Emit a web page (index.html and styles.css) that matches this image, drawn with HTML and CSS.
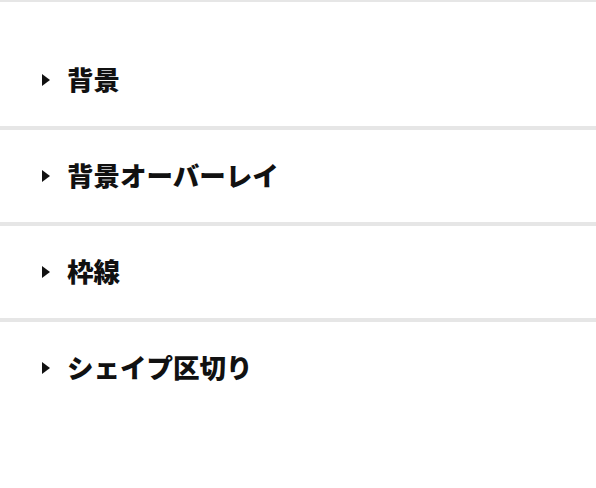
FILE: index.html
```html
<!DOCTYPE html>
<html lang="ja">
<head>
<meta charset="utf-8">
<link rel="stylesheet" href="styles.css">
</head>
<body>
<div class="panel">
  <details class="section first"><summary><span class="caret"></span><span class="label">背景</span></summary></details>
  <details class="section"><summary><span class="caret"></span><span class="label">背景オーバーレイ</span></summary></details>
  <details class="section"><summary><span class="caret"></span><span class="label">枠線</span></summary></details>
  <details class="section"><summary><span class="caret"></span><span class="label">シェイプ区切り</span></summary></details>
</div>
</body>
</html>
```
FILE: styles.css
```css
html, body {
  margin: 0;
  padding: 0;
  background: #fff;
}
body {
  font-family: "Noto Sans CJK JP", "Noto Sans", sans-serif;
  color: #111;
  overflow: hidden;
}
.panel {
  border-top: 2px solid #e6e6e6;
}
.section {
  border-bottom: 4px solid #e6e6e6;
}
.section:last-child {
  border-bottom: none;
}
.section.first {
  padding-top: 32px;
}
.section summary {
  list-style: none;
  display: flex;
  align-items: center;
  height: 92px;
  padding-left: 42px;
  gap: 17px;
  cursor: pointer;
}
.section summary::-webkit-details-marker { display: none; }
.caret {
  width: 0;
  height: 0;
  border-top: 6px solid transparent;
  border-bottom: 6px solid transparent;
  border-left: 8px solid #111;
}
.label {
  font-size: 26.5px;
  font-weight: 900;
  line-height: 1;
  margin-top: -2px;
}
```
